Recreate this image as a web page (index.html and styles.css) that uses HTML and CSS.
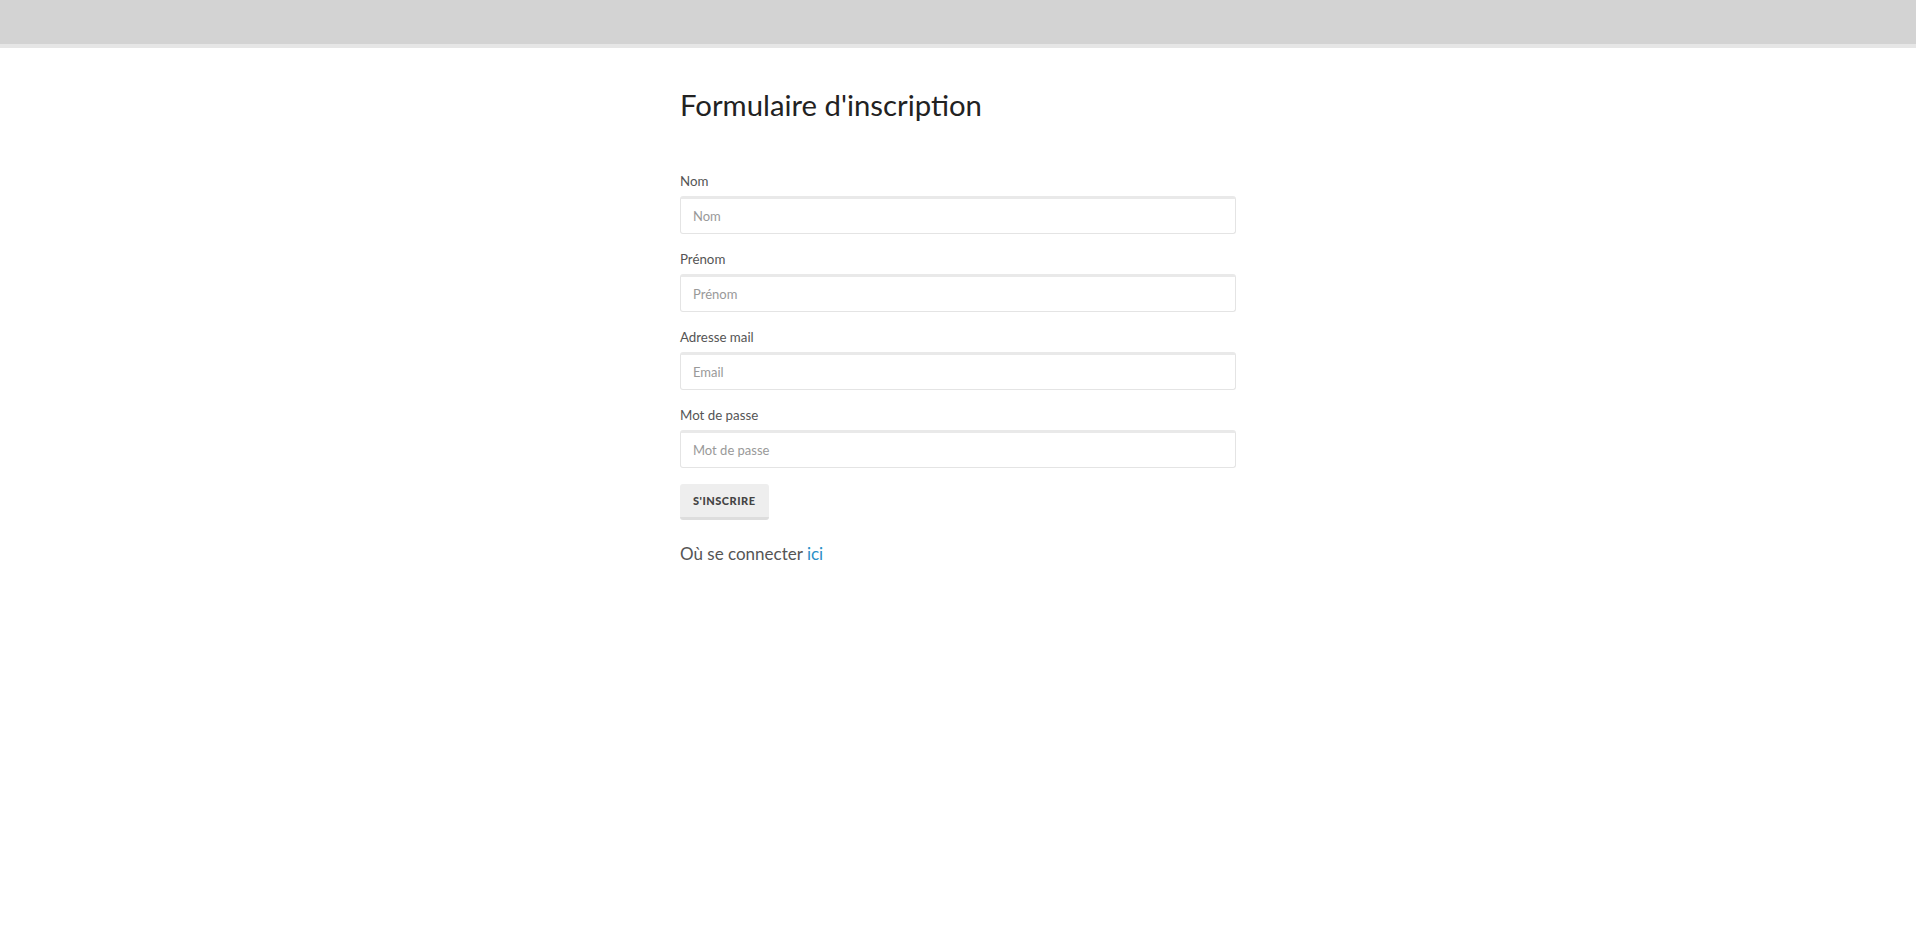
FILE: index.html
```html
<!DOCTYPE html>
<html lang="fr">
<head>
<meta charset="utf-8">
<title>Formulaire d'inscription</title>
<link rel="stylesheet" href="styles.css">
</head>
<body>
<header class="topbar"></header>
<main class="container">
  <h1 class="title">Formulaire d'inscription</h1>
  <form class="form">
    <div class="group">
      <label class="label" for="nom">Nom</label>
      <input class="input" id="nom" type="text" placeholder="Nom">
    </div>
    <div class="group">
      <label class="label" for="prenom">Prénom</label>
      <input class="input" id="prenom" type="text" placeholder="Prénom">
    </div>
    <div class="group">
      <label class="label" for="email">Adresse mail</label>
      <input class="input" id="email" type="email" placeholder="Email">
    </div>
    <div class="group">
      <label class="label" for="mdp">Mot de passe</label>
      <input class="input" id="mdp" type="password" placeholder="Mot de passe">
    </div>
    <button class="btn" type="button">S'inscrire</button>
  </form>
  <p class="login">Où se connecter <a class="link" href="#">ici</a></p>
</main>
</body>
</html>
```
FILE: styles.css
```css
html, body {
  margin: 0;
  padding: 0;
  background: #ffffff;
}
body {
  font-family: "Lato", "Open Sans", sans-serif;
  color: #333333;
}
.topbar {
  height: 44px;
  background: #d3d3d3;
  border-bottom: 4px solid #e6e6e6;
}
.container {
  width: 556px;
  margin: 0 auto;
}
.title {
  margin: 0;
  padding-top: 39px;
  font-size: 29.3px;
  font-weight: 400;
  line-height: 36px;
  color: #222222;
}
.form {
  margin-top: 49px;
}
.group {
  display: flex;
  flex-direction: column;
  margin-bottom: 16px;
}
.label {
  font-size: 13.3px;
  line-height: 18px;
  color: #555555;
  margin-bottom: 6px;
}
.input {
  box-sizing: border-box;
  height: 38px;
  width: 100%;
  padding: 0 12px;
  border: 1px solid #e4e4e4;
  border-top: 3px solid #e9e9e9;
  border-radius: 3px;
  font-family: inherit;
  font-size: 13px;
  color: #555555;
  background: #ffffff;
  outline: none;
}
.input::placeholder {
  color: #999999;
}
.btn {
  box-sizing: border-box;
  height: 36px;
  padding: 0 13px;
  border: none;
  border-bottom: 3px solid #dddddd;
  border-radius: 3px;
  background: #eeeeee;
  font-family: inherit;
  font-size: 11px;
  font-weight: 900;
  letter-spacing: 0.5px;
  text-transform: uppercase;
  color: #444444;
  cursor: pointer;
}
.login {
  margin: 22px 0 0;
  font-size: 17px;
  line-height: 24px;
  color: #555555;
}
.link {
  color: #2a8fc7;
  text-decoration: none;
}
```
